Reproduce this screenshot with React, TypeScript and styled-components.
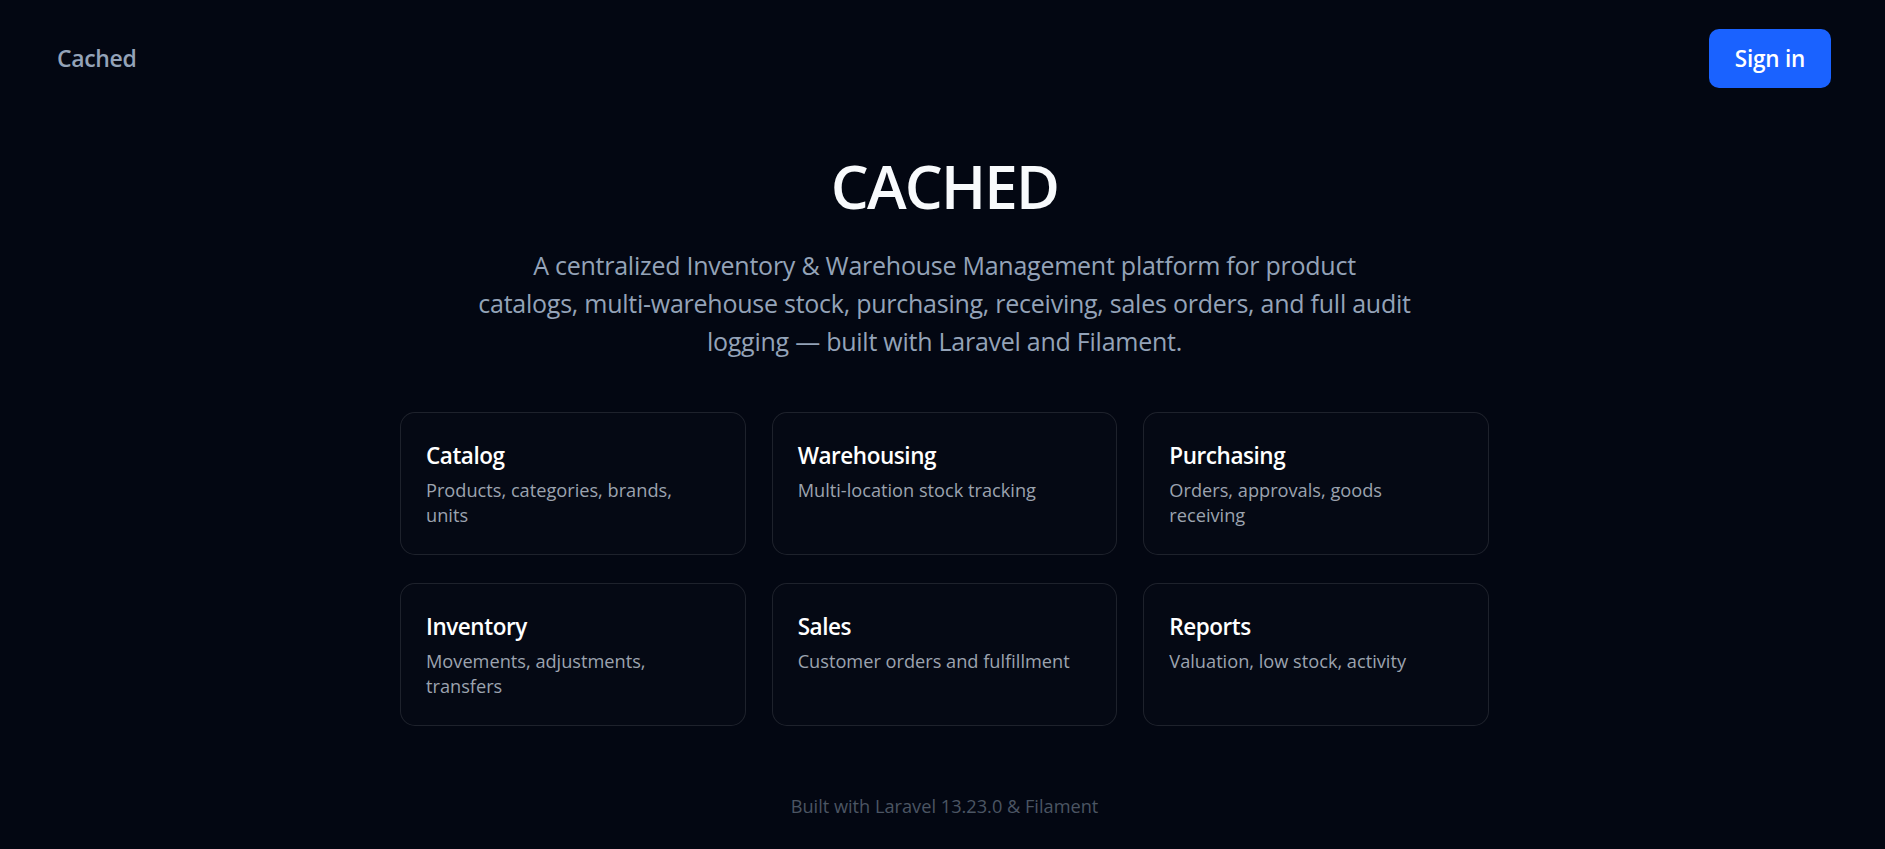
import styled, { createGlobalStyle } from 'styled-components';

const GlobalStyle = createGlobalStyle`
	body {
		margin: 0;
		background: #030712;
		font-family: 'Open Sans', 'Noto Sans', sans-serif;
		-webkit-font-smoothing: antialiased;
	}
`;

const features = [
	{ title: 'Catalog', text: 'Products, categories, brands, units' },
	{ title: 'Warehousing', text: 'Multi-location stock tracking' },
	{ title: 'Purchasing', text: 'Orders, approvals, goods receiving' },
	{ title: 'Inventory', text: 'Movements, adjustments, transfers' },
	{ title: 'Sales', text: 'Customer orders and fulfillment' },
	{ title: 'Reports', text: 'Valuation, low stock, activity' },
];

function App() {
	return (
		<Page>
			<GlobalStyle />
			<Nav>
				<Brand>Cached</Brand>
				<SignIn type='button'>Sign in</SignIn>
			</Nav>
			<Hero>
				<Title>CACHED</Title>
				<Lead>
					A centralized Inventory &amp; Warehouse Management platform for product
					<br />
					catalogs, multi-warehouse stock, purchasing, receiving, sales orders, and full audit
					<br />
					logging — built with Laravel and Filament.
				</Lead>
				<Grid>
					{features.map((f) => (
						<Card key={f.title}>
							<CardTitle>{f.title}</CardTitle>
							<CardText>{f.text}</CardText>
						</Card>
					))}
				</Grid>
				<Footer>Built with Laravel 13.23.0 &amp; Filament</Footer>
			</Hero>
		</Page>
	);
}

const Page = styled.div`
	min-height: 100vh;
	display: flex;
	flex-direction: column;
`;

const Nav = styled.header`
	display: flex;
	justify-content: space-between;
	align-items: center;
	padding: 29px 54px 29px 57px;
`;

const Brand = styled.a`
	font-size: 23px;
	line-height: 35px;
	font-weight: 600;
	color: #94a3b8;
	letter-spacing: -0.015em;
`;

const SignIn = styled.button`
	height: 59px;
	padding: 0 26px;
	border: none;
	border-radius: 10px;
	background: #1a62ff;
	color: #ffffff;
	font-family: inherit;
	font-size: 22.5px;
	font-weight: 600;
	letter-spacing: -0.01em;
	cursor: pointer;
`;

const Hero = styled.main`
	display: flex;
	flex-direction: column;
	align-items: center;
	padding: 39px 0 0 4px;
`;

const Title = styled.h1`
	margin: 0;
	font-size: 60px;
	line-height: 1;
	font-weight: 600;
	letter-spacing: -0.03em;
	color: #f8fafc;
`;

const Lead = styled.p`
	margin: 30px 0 0;
	text-align: center;
	font-size: 25px;
	line-height: 38px;
	letter-spacing: -0.01em;
	color: #94a3b8;
`;

const Grid = styled.section`
	margin-top: 52px;
	width: 1089px;
	display: grid;
	grid-template-columns: repeat(3, 1fr);
	gap: 28px 26px;
`;

const Card = styled.article`
	padding: 25px 34px 26px 25px;
	border: 1px solid rgba(255, 255, 255, 0.1);
	border-radius: 15px;
	background: rgba(255, 255, 255, 0.01);
`;

const CardTitle = styled.h3`
	margin: 0;
	font-size: 22.5px;
	line-height: 35px;
	font-weight: 600;
	letter-spacing: -0.02em;
	color: #ffffff;
`;

const CardText = styled.p`
	margin: 5px 0 0;
	font-size: 18.2px;
	line-height: 25px;
	color: #9ca3af;
`;

const Footer = styled.footer`
	margin-top: 68px;
	font-size: 18.2px;
	line-height: 25px;
	color: #4b5563;
`;

export default App;
